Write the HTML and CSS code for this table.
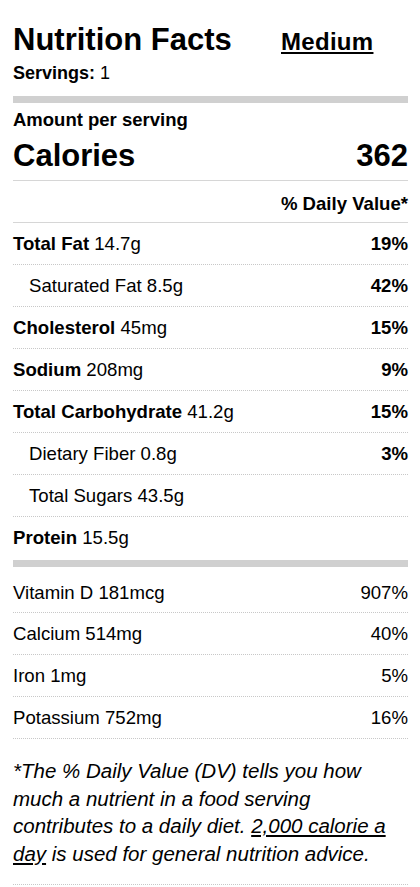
FILE: index.html
```html
<!DOCTYPE html>
<html lang="en">
<head>
    <meta charset="UTF-8">
    <meta name="viewport" content="width=device-width, initial-scale=1.0">
    <title>Nutrition Facts</title>

    <link rel="stylesheet" href="styles.css">
</head>
<body>

    <div class="label">
        <div class="label-head">
            <h1 class="label-title">Nutrition Facts</h1>
            <a href="#" class="size-link">Medium</a>
        </div>
        <div class="servings"><b>Servings:</b> 1</div>

        <div class="bar"></div>

        <div class="amount">Amount per serving</div>
        <div class="calories">
            <span>Calories</span>
            <span>362</span>
        </div>
        <div class="dv-head">% Daily Value*</div>

        <div class="row">
            <span><b>Total Fat</b> 14.7g</span>
            <b>19%</b>
        </div>
        <div class="row sub">
            <span>Saturated Fat 8.5g</span>
            <b>42%</b>
        </div>
        <div class="row">
            <span><b>Cholesterol</b> 45mg</span>
            <b>15%</b>
        </div>
        <div class="row">
            <span><b>Sodium</b> 208mg</span>
            <b>9%</b>
        </div>
        <div class="row">
            <span><b>Total Carbohydrate</b> 41.2g</span>
            <b>15%</b>
        </div>
        <div class="row sub">
            <span>Dietary Fiber 0.8g</span>
            <b>3%</b>
        </div>
        <div class="row sub">
            <span>Total Sugars 43.5g</span>
        </div>
        <div class="row last">
            <span><b>Protein</b> 15.5g</span>
        </div>

        <div class="bar bar-low"></div>

        <div class="row first">
            <span>Vitamin D 181mcg</span>
            <span>907%</span>
        </div>
        <div class="row">
            <span>Calcium 514mg</span>
            <span>40%</span>
        </div>
        <div class="row">
            <span>Iron 1mg</span>
            <span>5%</span>
        </div>
        <div class="row">
            <span>Potassium 752mg</span>
            <span>16%</span>
        </div>

        <p class="footnote">*The % Daily Value (DV) tells you how much a nutrient in a food serving contributes to a daily diet. <u>2,000 calorie a day</u> is used for general nutrition advice.</p>
    </div>

</body>
</html>
```

FILE: styles.css
```css
body {
    font-family: "Liberation Sans", Arial, sans-serif;
    margin: 0;
    padding: 0;
    background-color: #fff;
    color: #000;
}

.label {
    padding: 0 12px 0 13px;
}

.label-head {
    display: flex;
    align-items: baseline;
    padding-top: 22px;
}

.label-title {
    margin: 0;
    width: 268px;
    font-size: 31px;
    line-height: 36px;
    font-weight: bold;
}

.size-link {
    color: #000;
    font-size: 24px;
    letter-spacing: 0.3px;
    font-weight: bold;
    text-decoration: underline;
    text-underline-offset: 2px;
}

.servings {
    margin-top: 5px;
    font-size: 18px;
    line-height: 20px;
}

.bar {
    height: 7px;
    margin-top: 13px;
    background-color: #d0d0d0;
}

.bar-low {
    margin-top: 2px;
}

.amount {
    margin-top: 7px;
    font-size: 18.5px;
    line-height: 20px;
    font-weight: bold;
}

.calories {
    display: flex;
    justify-content: space-between;
    margin-top: 8px;
    padding-bottom: 6px;
    border-bottom: 1px solid #d6d6d6;
    font-size: 31px;
    line-height: 36px;
    font-weight: bold;
}

.dv-head {
    padding: 12px 0 7px;
    border-bottom: 1px solid #d6d6d6;
    text-align: right;
    font-size: 18.6px;
    line-height: 22px;
    font-weight: bold;
}

.row {
    display: flex;
    justify-content: space-between;
    padding-top: 1px;
    font-size: 18.6px;
    line-height: 40px;
    border-bottom: 1px dotted #c8c8c8;
}

.row.sub {
    padding-left: 16px;
}

.row.last {
    border-bottom: none;
}

.row.first {
    padding-top: 7px;
    line-height: 38px;
}

.footnote {
    margin: 18px 0 0;
    padding-bottom: 17px;
    border-bottom: 1px dotted #c8c8c8;
    font-size: 20.5px;
    line-height: 27.5px;
    font-style: italic;
}

.footnote u {
    text-underline-offset: 2px;
}
```
